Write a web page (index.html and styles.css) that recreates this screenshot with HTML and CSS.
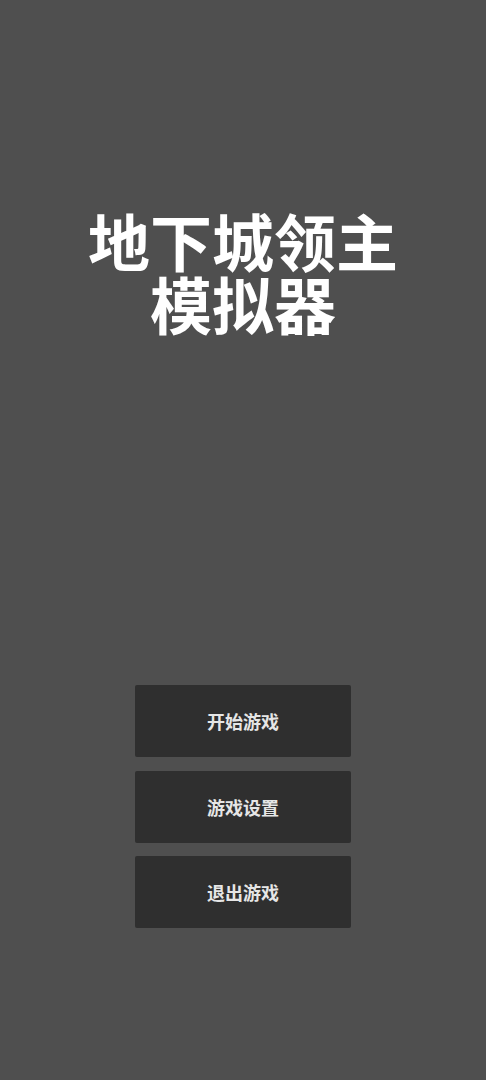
FILE: index.html
```html
<!DOCTYPE html>
<html lang="zh-CN">
<head>
<meta charset="utf-8">
<title>地下城领主模拟器</title>
<link rel="stylesheet" href="styles.css">
</head>
<body>
<main class="screen">
  <h1 class="title"><span class="title-line">地下城领主</span><span class="title-line">模拟器</span></h1>
  <nav class="menu">
    <button class="menu-btn">开始游戏</button>
    <button class="menu-btn">游戏设置</button>
    <button class="menu-btn">退出游戏</button>
  </nav>
</main>
</body>
</html>
```

FILE: styles.css
```css
html, body {
  margin: 0;
  padding: 0;
  background: #4f4f4f;
}
.screen {
  width: 486px;
  height: 1080px;
  display: flex;
  flex-direction: column;
  align-items: center;
  font-family: "Noto Sans CJK SC", "Noto Sans", sans-serif;
}
.title {
  margin: 209px 0 0;
  display: flex;
  flex-direction: column;
  align-items: center;
  font-size: 62px;
  line-height: 63px;
  font-weight: 700;
  color: #ffffff;
  text-align: center;
}
.title-line {
  display: block;
  height: 63px;
}
.menu {
  margin-top: 350px;
  display: flex;
  flex-direction: column;
  gap: 13.5px;
}
.menu-btn {
  width: 216px;
  height: 72px;
  border: none;
  border-radius: 2px;
  background: #2f2f2f;
  color: #e6e6e6;
  font-family: "Noto Sans CJK SC", "Noto Sans", sans-serif;
  font-size: 18px;
  font-weight: 700;
  padding: 0;
}
```
